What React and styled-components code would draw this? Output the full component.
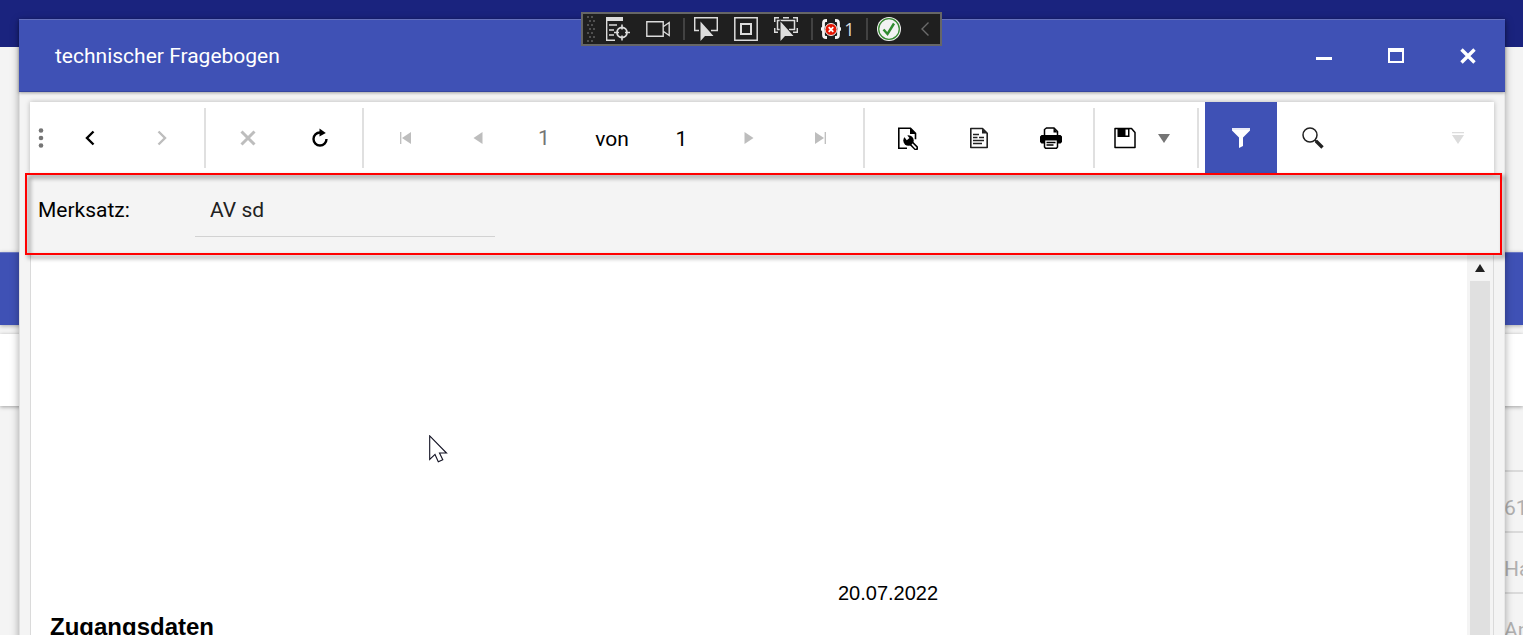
import React from "react";
import styled, { createGlobalStyle } from "styled-components";

const GlobalStyle = createGlobalStyle`
  *, *::before, *::after { box-sizing: border-box; }
  body {
    margin: 0;
    overflow: hidden;
    background: #f4f4f4;
    font-family: Roboto, "Liberation Sans", sans-serif;
    font-size: 21px;
    color: #000;
  }
  button, input { font: inherit; color: inherit; margin: 0; }
  svg { display: block; }
`;

const Desktop = styled.div`
  position: relative;
  height: 100vh;
  overflow: hidden;
`;

/* Application behind the dialog */
const AppBar = styled.header`
  height: 47px;
  background: #1a237e;
`;

const BackHeader = styled.div`
  height: 73px;
  margin-top: 205px;
  background: #3f51b5;
  border-top: 1px solid #6a78c4;
  box-shadow: 0 1px 4px rgba(0, 0, 0, 0.3);
`;

const BackPanel = styled.div`
  height: 72px;
  margin-top: 9px;
  background: #fff;
  box-shadow: 0 1px 4px rgba(0, 0, 0, 0.35);
`;

const BackForm = styled.div`
  display: flex;
  flex-direction: column;
  width: 19px;
  margin: 64px 0 0 auto;
`;

const BackField = styled.input`
  width: 100%;
  height: 61px;
  padding: 12px 0 0;
  border: 0;
  border-top: 2px solid #dadada;
  background: none;
  color: #b0b0b0;
`;

/* Dialog */
const Dialog = styled.section`
  position: absolute;
  inset: 19px 18px -20px 19px;
  display: flex;
  flex-direction: column;
  background: #f4f4f4;
  border: 1px solid #e0e0e0;
  border-top: 0;
  border-right-color: #e8e8e8;
  box-shadow: 0 2px 8px rgba(0, 0, 0, 0.35);
`;

const TitleBar = styled.header`
  display: flex;
  align-items: center;
  flex: none;
  height: 73px;
  margin: 0 -1px;
  padding: 0 1px 0 36px;
  background: #3f51b5;
  border-top: 1px solid #6571bd;
  border-bottom: 1px solid #35459f;
  box-shadow: 0 1px 3px rgba(0, 0, 0, 0.35);
  color: #fff;
`;

const Title = styled.h1`
  flex: 1;
  margin: 0;
  font-size: 21px;
  font-weight: 400;
`;

const IconButton = styled.button`
  display: flex;
  flex: none;
  align-items: center;
  justify-content: center;
  width: ${(p) => p.$width || 72}px;
  height: 72px;
  padding: 0;
  border: 0;
  background: ${(p) => (p.$active ? "#3f51b5" : "transparent")};
  color: ${(p) => p.$color || "#000"};
`;

const Toolbar = styled.div`
  display: flex;
  flex: none;
  align-items: center;
  height: 72px;
  margin: 10px 10px 0;
  background: #fff;
  box-shadow: 0 0 5px rgba(0, 0, 0, 0.25);
`;

const Grip = styled.div`
  display: flex;
  width: 24px;
  padding-left: 8px;
`;

const Separator = styled.div`
  flex: none;
  width: 2px;
  height: 60px;
  margin: 0 6px;
  background: #e0e0e0;
`;

const PageInput = styled.input`
  width: 60px;
  height: 48px;
  padding: 0;
  border: 0;
  background: none;
  text-align: center;
  color: #757575;
`;

const PageText = styled.span`
  width: ${(p) => p.$width}px;
  padding-top: 2px;
  text-align: center;
`;

const SplitButton = styled.div`
  display: flex;
  padding-right: 12px;
`;

const Spacer = styled.div`
  flex: 1;
`;

const Parameters = styled.div`
  position: relative;
  display: flex;
  flex: none;
  align-items: center;
  height: 80px;
  padding: 0 18px 8px;
`;

const Highlight = styled.div`
  position: absolute;
  inset: -1px 2px -1px 5px;
  border: 2px solid #f00;
  filter: drop-shadow(3px 3px 2px rgba(0, 0, 0, 0.5));
  pointer-events: none;
`;

const ParameterLabel = styled.label`
  width: 157px;
`;

const ParameterInput = styled.input`
  width: 300px;
  height: 54px;
  padding: 0 15px;
  border: 0;
  border-bottom: 1px solid #d2d2d2;
  background: none;
  color: #212121;
`;

const Viewer = styled.div`
  display: flex;
  flex: 1;
  min-height: 0;
  margin: 0 10px;
  border: 1px solid #dadada;
  border-top: 0;
`;

const Report = styled.article`
  flex: 1;
  padding: 327px 19px 0;
  overflow: hidden;
  background: #fff;
  font-family: "Liberation Sans", Arial, sans-serif;
`;

const ReportDate = styled.p`
  margin: 0 0 0 788px;
  font-size: 20px;
  line-height: 24px;
`;

const ReportHeading = styled.h2`
  margin: 8px 0 0;
  font-size: 24px;
  line-height: 28px;
`;

const ScrollTrack = styled.div`
  display: flex;
  flex-direction: column;
  flex: none;
  width: 26px;
  padding: 0 3px;
`;

const ScrollArrow = styled.button`
  display: flex;
  flex: none;
  align-items: center;
  justify-content: center;
  height: 27px;
  padding: 0;
  border: 0;
  background: none;
`;

const ScrollThumb = styled.div`
  flex: 1;
  background: #e0e0e0;
`;

const Pointer = styled.svg`
  position: absolute;
  top: 435px;
  left: 429px;
`;

/* Floating debug toolbar */
const DebugBar = styled.div`
  position: absolute;
  top: 12px;
  left: 0;
  right: 0;
  display: flex;
  align-items: center;
  width: 361px;
  height: 34px;
  margin: 0 auto;
  padding-left: 4px;
  background: #1f1f1f;
  border: 2px solid #666;
`;

const DebugGrip = styled.svg`
  margin-right: 3px;
`;

const DebugButton = styled.button`
  display: flex;
  flex: none;
  align-items: center;
  justify-content: center;
  gap: 2px;
  width: ${(p) => p.$width || 40}px;
  height: 30px;
  padding: 0;
  border: 0;
  background: none;
  color: #dcdcdc;
  font-family: "Open Sans", sans-serif;
  font-size: 18px;
  line-height: 28px;
`;

const DebugSeparator = styled.div`
  flex: none;
  width: 2px;
  height: 22px;
  margin: 0 1px 0 5px;
  background: #424242;
`;

const Svg = ({ w = 24, h = 24, children }) => (
  <svg width={w} height={h} viewBox={`0 0 ${w} ${h}`} fill="none" aria-hidden="true">
    {children}
  </svg>
);

const Cross = ({ width = 3 }) => (
  <Svg w={16} h={16}>
    <path d="M1.500 1.500l13 13M14.500 1.500l-13 13" stroke="currentColor" strokeWidth={width} />
  </Svg>
);

const Chevron = ({ next }) => (
  <Svg w={10} h={16}>
    <path d={next ? "M1.500 1.500L8 8l-6.500 6.500" : "M8.500 1.500L2 8l6.500 6.500"} stroke="currentColor" strokeWidth="2.4" />
  </Svg>
);

const PageArrow = ({ d, bar }) => (
  <Svg w={12} h={12}>
    <path d={d} fill="currentColor" />
    {bar !== undefined && <path d={`M${bar} 0v12`} stroke="currentColor" strokeWidth="1.3" />}
  </Svg>
);

const ReloadIcon = () => (
  <Svg w={18} h={20}>
    <path d="M9 4.500A6.500 6.500 0 1 0 15.500 11" stroke="currentColor" strokeWidth="2.4" />
    <path d="M8.500 0.500L14.800 5 8.500 8.500z" fill="currentColor" />
  </Svg>
);

const DesignIcon = () => (
  <Svg w={22} h={24}>
    <path d="M11 22.300H2.800V2.300H14.500l5 5v6" stroke="currentColor" strokeWidth="1.600" />
    <path d="M14 1.700l6 6.200h-6z" fill="currentColor" />
    <circle cx="12.500" cy="14.500" r="5.200" fill="currentColor" />
    <path d="M13 15l7 7" stroke="currentColor" strokeWidth="4.600" strokeLinecap="round" />
    <path d="M8.500 8.500l3.600 4.600" stroke="#fff" strokeWidth="3.400" />
    <path d="M16.500 18.500l3.200 3.300" stroke="#fff" strokeWidth="1.700" strokeLinecap="round" />
  </Svg>
);

const DocumentIcon = () => (
  <Svg w={20} h={22}>
    <path d="M1.800 1.500H13.500l4.700 4.700v14.300H1.800z" stroke="#212121" strokeWidth="1.600" strokeLinejoin="round" />
    <path d="M13 1.500v5h5.200z" fill="#212121" />
    <path d="M4 7.500h6M4 10.500h4.500M10 10.500h5M4 13.500h11M4 16.500h9" stroke="#212121" strokeWidth="1.300" />
  </Svg>
);

const PrintIcon = () => (
  <Svg w={22} h={22}>
    <path d="M4.500 8V2.500L6.500 1h7.500l3.500 3.500V8" stroke="currentColor" strokeWidth="1.500" />
    <path d="M13.500 1v4.500h4zM0 9.500L1.500 8h19L22 9.500V15l-1.500 1.500H1.500L0 15z" fill="currentColor" />
    <path d="M4.500 12.800h13V20l-1 1.200h-11l-1-1.200z" fill="#fff" stroke="currentColor" strokeWidth="1.500" />
    <path d="M6.500 15.500h9M6.500 18h7" stroke="currentColor" strokeWidth="1.300" />
  </Svg>
);

const SaveIcon = () => (
  <Svg w={22} h={22}>
    <path d="M1 1.500h16.500l3.500 4v15H1z" stroke="currentColor" strokeWidth="1.500" strokeLinejoin="round" />
    <path d="M3.500 1h12v9h-12z" fill="currentColor" />
    <path d="M11.500 2.500h2.500v6h-2.500z" fill="#fff" />
  </Svg>
);

const FilterIcon = () => (
  <Svg w={18} h={20}>
    <path d="M0 0h18v2.500L11 9.500V18l-4 2V9.500L0 2.500z" fill="#fff" />
    <path d="M0 1h18" stroke="#c5cae9" strokeWidth=".8" />
  </Svg>
);

const SearchIcon = () => (
  <Svg w={22} h={22}>
    <circle cx="8" cy="8" r="7" stroke="#212121" strokeWidth="1.500" />
    <path d="M12.800 12.800l1.700 1.700" stroke="#212121" strokeWidth="1.800" />
    <path d="M14 14l6.500 6.500" stroke="#212121" strokeWidth="3.400" />
  </Svg>
);

const ElementArrow = () => (
  <path d="M6.500 4.500v19.500l4.500-5h8.500z" fill="#dcdcdc" stroke="#1f1f1f" strokeWidth="1.600" paintOrder="stroke" />
);

function DebugTools() {
  const dots = [];
  for (let y = 0; y < 7; y += 1) {
    for (let x = 0; x < 2; x += 1) {
      dots.push(<rect key={`${x}-${y}`} x={x * 4 + (y % 2) * 2} y={y * 4} width="2" height="2" fill="#505050" />);
    }
  }
  return (
    <DebugBar role="toolbar" aria-label="Debug">
      <DebugGrip width="8" height="26" aria-hidden="true">{dots}</DebugGrip>
      <DebugButton aria-label="Live Visual Tree">
        <Svg>
          <path d="M0 0h17v4H0z" fill="#dcdcdc" />
          <path d="M.7 4v19.300H9M3 8h8M3 13h5M3 18h5" stroke="#dcdcdc" strokeWidth="1.400" />
          <circle cx="16" cy="15.500" r="5" stroke="#dcdcdc" strokeWidth="1.800" />
          <path d="M16 7.500v5M16 18.500v5M8 15.500h5M19 15.500h5" stroke="#dcdcdc" strokeWidth="1.600" />
        </Svg>
      </DebugButton>
      <DebugButton aria-label="Record">
        <Svg>
          <path d="M.8 4.800h16.400v14.400H.8zM17.200 9.800l6-4.300v13l-6-4.300" stroke="#dcdcdc" strokeWidth="1.400" />
        </Svg>
      </DebugButton>
      <DebugSeparator />
      <DebugButton aria-label="Select element">
        <Svg>
          <path d="M5 13.500H.7V.7h22.600v12.800H17" stroke="#dcdcdc" strokeWidth="1.500" />
          <ElementArrow />
        </Svg>
      </DebugButton>
      <DebugButton aria-label="Layout adorners">
        <Svg>
          <path d="M.8.800h22.400v22.400H.8z" stroke="#dcdcdc" strokeWidth="1.500" />
          <path d="M7 7h10v10H7z" stroke="#dcdcdc" strokeWidth="2" />
        </Svg>
      </DebugButton>
      <DebugButton aria-label="Track focus">
        <Svg>
          <path d="M5 .7H.7V5M9 .7h6M19 .7h4.300V5M.7 11v4.300H4M23.300 11v4.300H19" stroke="#dcdcdc" strokeWidth="1.500" />
          <path d="M7 12.500H3.500v-9h17v9H15" stroke="#dcdcdc" strokeWidth="1.500" />
          <ElementArrow />
        </Svg>
      </DebugButton>
      <DebugSeparator />
      <DebugButton $width={47} aria-label="1 binding failure">
        <Svg w={22} h={20}>
          <path
            d="M7 1.500H6Q3.500 1.500 3.500 4v3.500Q3.500 10 1 10q2.500 0 2.500 2.500V16q0 2.500 2.500 2.500h1M15 1.500h1q2.500 0 2.500 2.500v3.500Q18.500 10 21 10q-2.500 0-2.500 2.500V16q0 2.500-2.500 2.500h-1"
            stroke="#f4f4f4"
            strokeWidth="2.800"
          />
          <circle cx="11" cy="10.500" r="6" fill="#e51400" stroke="#f4f4f4" strokeWidth="1" />
          <path d="M8.700 8.200l4.600 4.600M13.300 8.200l-4.600 4.600" stroke="#fff" strokeWidth="1.800" />
        </Svg>
        1
      </DebugButton>
      <DebugSeparator />
      <DebugButton aria-label="Hot Reload">
        <Svg>
          <circle cx="12" cy="12" r="12" fill="#f2f2f2" />
          <circle cx="12" cy="12" r="10.300" stroke="#388a34" strokeWidth="1.300" />
          <path d="M6.500 12.500l4 4.500 6.500-10.500" stroke="#2f8a2f" strokeWidth="2.400" />
        </Svg>
      </DebugButton>
      <DebugButton $width={31} aria-label="Collapse">
        <Svg w={8} h={14}>
          <path d="M7.500.500L1 7l6.500 6.500" stroke="#6b6b6b" strokeWidth="1.400" />
        </Svg>
      </DebugButton>
    </DebugBar>
  );
}

const MUTED = "#bdbdbd";

function ReportToolbar() {
  return (
    <Toolbar role="toolbar" aria-label="Bericht">
      <Grip>
        <Svg w={6} h={20}>
          <g fill="#757575">
            <circle cx="3" cy="2.500" r="2.300" />
            <circle cx="3" cy="10" r="2.300" />
            <circle cx="3" cy="17.500" r="2.300" />
          </g>
        </Svg>
      </Grip>
      <IconButton aria-label="Zurück"><Chevron /></IconButton>
      <IconButton aria-label="Vorwärts" $color={MUTED}><Chevron next /></IconButton>
      <Separator />
      <IconButton aria-label="Abbrechen" $color={MUTED}><Cross /></IconButton>
      <IconButton aria-label="Aktualisieren"><ReloadIcon /></IconButton>
      <Separator />
      <IconButton aria-label="Erste Seite" $color={MUTED}><PageArrow d="M11 0v12L2 6z" bar={0.7} /></IconButton>
      <IconButton aria-label="Vorherige Seite" $color={MUTED}><PageArrow d="M10.500 0v12L1.500 6z" /></IconButton>
      <PageInput aria-label="Seite" defaultValue="1" />
      <PageText $width={76}>von</PageText>
      <PageText $width={63}>1</PageText>
      <IconButton aria-label="Nächste Seite" $color={MUTED}><PageArrow d="M1.500 0v12l9-6z" /></IconButton>
      <IconButton aria-label="Letzte Seite" $color={MUTED}><PageArrow d="M0 0v12l9-6z" bar={10.3} /></IconButton>
      <Separator />
      <IconButton aria-label="Seite einrichten"><DesignIcon /></IconButton>
      <IconButton aria-label="Seitenansicht"><DocumentIcon /></IconButton>
      <IconButton aria-label="Drucken"><PrintIcon /></IconButton>
      <Separator />
      <SplitButton>
        <IconButton $width={48} aria-label="Exportieren"><SaveIcon /></IconButton>
        <IconButton $width={30} $color="#757575" aria-label="Exportformate">
          <Svg w={12} h={10}><path d="M0 1h12L6 10z" fill="currentColor" /></Svg>
        </IconButton>
      </SplitButton>
      <Separator />
      <IconButton $active aria-label="Parameter"><FilterIcon /></IconButton>
      <IconButton aria-label="Suchen"><SearchIcon /></IconButton>
      <Spacer />
      <IconButton aria-label="Mehr" $color="#dcdcdc">
        <Svg w={12} h={12}><path d="M0 0h12v1.300H0zM0 3h12L6 12z" fill="currentColor" /></Svg>
      </IconButton>
    </Toolbar>
  );
}

export default function App() {
  return (
    <>
      <GlobalStyle />
      <Desktop>
        <AppBar />
        <BackHeader />
        <BackPanel />
        <BackForm>
          <BackField aria-label="Nummer" defaultValue="61" />
          <BackField aria-label="Name" defaultValue="Ha" />
          <BackField aria-label="Zusatz" defaultValue="An" />
        </BackForm>

        <Dialog role="dialog" aria-labelledby="dialog-title">
          <TitleBar>
            <Title id="dialog-title">technischer Fragebogen</Title>
            <IconButton $color="#fff" aria-label="Minimieren">
              <Svg w={16} h={16}><path d="M0 9h16v3H0z" fill="currentColor" /></Svg>
            </IconButton>
            <IconButton $color="#fff" aria-label="Maximieren">
              <Svg w={16} h={16}><path d="M0 0h16v15H0zM2 4V13h12V4z" fill="currentColor" fillRule="evenodd" /></Svg>
            </IconButton>
            <IconButton $color="#fff" aria-label="Schließen"><Cross width={3.4} /></IconButton>
          </TitleBar>
          <ReportToolbar />
          <Parameters>
            <ParameterLabel htmlFor="merksatz">Merksatz:</ParameterLabel>
            <ParameterInput id="merksatz" defaultValue="AV sd" />
            <Highlight />
          </Parameters>
          <Viewer>
            <Report>
              <ReportDate>20.07.2022</ReportDate>
              <ReportHeading>Zugangsdaten</ReportHeading>
            </Report>
            <ScrollTrack>
              <ScrollArrow aria-label="Nach oben">
                <Svg w={10} h={8}><path d="M0 8h10L5 0z" fill="#212121" /></Svg>
              </ScrollArrow>
              <ScrollThumb />
            </ScrollTrack>
          </Viewer>
        </Dialog>

        <Pointer width="19" height="28" viewBox="0 0 19 28" aria-hidden="true">
          <path d="M.7.900v23.500l5.300-5 3.300 7.300 4.500-2-3.300-6.700h7z" fill="#fff" stroke="#111122" strokeWidth="1.100" />
        </Pointer>
        <DebugTools />
      </Desktop>
    </>
  );
}
